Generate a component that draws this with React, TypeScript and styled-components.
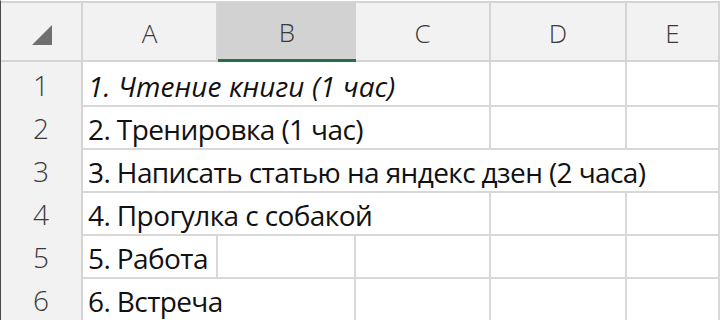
import React from "react";
import styled, { createGlobalStyle } from "styled-components";

const GlobalStyle = createGlobalStyle`
  html, body {
    margin: 0;
    padding: 0;
    background: #ffffff;
  }
  body {
    width: 720px;
    height: 320px;
    overflow: hidden;
  }
`;

const COLS = "82px 135px 138px 135px 136px 1fr";

const Sheet = styled.div`
  width: 720px;
  height: 320px;
  overflow: hidden;
  border-top: 1px solid #ffffff;
  border-left: 1px solid #4a4a4a;
  box-sizing: border-box;
  font-family: "Open Sans", "Noto Sans", sans-serif;
`;

const HeaderRow = styled.div`
  display: grid;
  grid-template-columns: ${COLS};
  height: 61px;
  border-top: 2px solid #d4d4d4;
  box-sizing: border-box;
  background: #f2f2f2;
`;

const Corner = styled.div`
  display: flex;
  align-items: flex-start;
  justify-content: flex-end;
  padding: 22px 29px 0 0;
  border-right: 2px solid #d4d4d4;
  border-bottom: 2px solid #d4d4d4;
`;

const ColHeader = styled.div<{ $selected?: boolean }>`
  display: flex;
  align-items: center;
  justify-content: center;
  font-size: 26px;
  font-weight: 300;
  color: #3a3a3a;
  background: ${(p) => (p.$selected ? "#d2d2d2" : "#f2f2f2")};
  border-right: ${(p) => (p.$selected ? "none" : "2px solid #d4d4d4")};
  border-bottom: ${(p) => (p.$selected ? "3px solid #217346" : "2px solid #d4d4d4")};
  padding-top: 2px;
`;

const Row = styled.div`
  display: grid;
  grid-template-columns: ${COLS};
  height: 43px;
`;

const RowHeader = styled.div`
  display: flex;
  align-items: center;
  justify-content: center;
  background: #f2f2f2;
  color: #3a3a3a;
  font-size: 28px;
  font-weight: 300;
  padding-top: 2px;
  border-right: 2px solid #d4d4d4;
  border-bottom: 2px solid #d4d4d4;
`;

const Cell = styled.div<{ $span?: number; $italic?: boolean }>`
  grid-column: span ${(p) => p.$span ?? 1};
  display: flex;
  align-items: center;
  padding: 5px 0 0 5px;
  white-space: nowrap;
  overflow: visible;
  font-size: 28px;
  font-style: ${(p) => (p.$italic ? "italic" : "normal")};
  letter-spacing: ${(p) => (p.$italic ? "0.1px" : "-0.6px")};
  color: #111111;
  border-right: 2px solid #d8d8d8;
  border-bottom: 2px solid #d8d8d8;
`;

type RowData = { n: number; text: string; span: number; italic?: boolean };

const rows: RowData[] = [
  { n: 1, text: "1. Чтение книги (1 час)", span: 3, italic: true },
  { n: 2, text: "2. Тренировка (1 час)", span: 3 },
  { n: 3, text: "3. Написать статью на яндекс дзен (2 часа)", span: 5 },
  { n: 4, text: "4. Прогулка с собакой", span: 3 },
  { n: 5, text: "5. Работа", span: 1 },
  { n: 6, text: "6. Встреча", span: 2 },
];

const columns = ["A", "B", "C", "D", "E"];

export default function App() {
  return (
    <>
      <GlobalStyle />
      <Sheet>
        <HeaderRow>
          <Corner>
            <svg width="20" height="20" viewBox="0 0 20 20">
              <polygon points="20,0 20,20 0,20" fill="#6f6f6f" />
            </svg>
          </Corner>
          {columns.map((c) => (
            <ColHeader key={c} $selected={c === "B"}>
              {c}
            </ColHeader>
          ))}
        </HeaderRow>
        {rows.map((r) => (
          <Row key={r.n}>
            <RowHeader>{r.n}</RowHeader>
            <Cell $span={r.span} $italic={r.italic}>
              {r.text}
            </Cell>
            {Array.from({ length: 5 - r.span }).map((_, i) => (
              <Cell key={i} />
            ))}
          </Row>
        ))}
      </Sheet>
    </>
  );
}
